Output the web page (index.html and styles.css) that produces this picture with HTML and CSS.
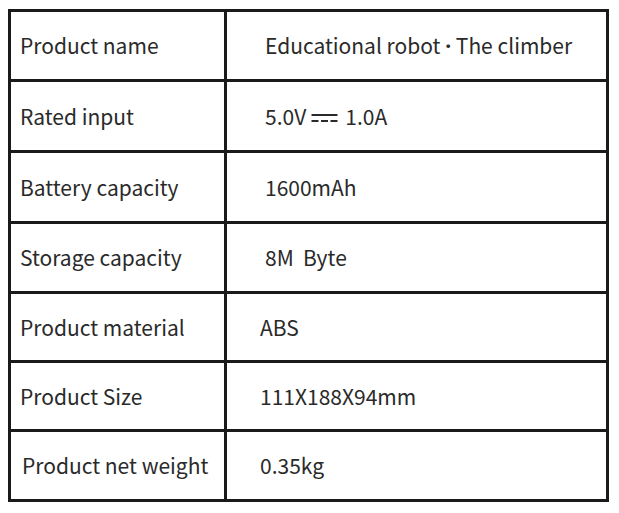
FILE: index.html
```html
<!DOCTYPE html>
<html lang="en">
<head>
<meta charset="utf-8">
<title>Product specifications</title>
<link rel="stylesheet" href="styles.css">
</head>
<body>
<table class="spec">
  <tr class="r1">
    <td class="k">Product name</td>
    <td class="v">Educational robot <span class="dot">·</span> The climber</td>
  </tr>
  <tr class="r2">
    <td class="k">Rated input</td>
    <td class="v">5.0V<svg class="dc" width="27" height="10" viewBox="0 0 27 10" aria-hidden="true"><rect x="0.5" y="1" width="26" height="2" fill="#2a2a2a"/><rect x="0.5" y="7" width="7" height="2" fill="#2a2a2a"/><rect x="10" y="7" width="7" height="2" fill="#2a2a2a"/><rect x="19.5" y="7" width="7" height="2" fill="#2a2a2a"/></svg>1.0A</td>
  </tr>
  <tr class="r3">
    <td class="k">Battery capacity</td>
    <td class="v">1600mAh</td>
  </tr>
  <tr class="r4">
    <td class="k">Storage capacity</td>
    <td class="v">8M&nbsp;&nbsp;Byte</td>
  </tr>
  <tr class="r5">
    <td class="k">Product material</td>
    <td class="v v-tight">ABS</td>
  </tr>
  <tr class="r6">
    <td class="k">Product Size</td>
    <td class="v v-tight">111X188X94mm</td>
  </tr>
  <tr class="r7">
    <td class="k k-wide">Product net weight</td>
    <td class="v v-tight">0.35kg</td>
  </tr>
</table>
</body>
</html>
```

FILE: styles.css
```css
html, body {
  margin: 0;
  padding: 0;
  background: #ffffff;
}

body {
  padding: 9px 0 0 8px;
  font-family: "Noto Sans CJK SC", "Noto Sans", sans-serif;
  font-size: 21px;
  color: #2a2a2a;
}

.spec {
  border-collapse: collapse;
  width: 601px;
  table-layout: fixed;
  border: 3px solid #1a1a1a;
}

.spec td {
  border: 3px solid #1a1a1a;
  padding: 0;
  vertical-align: middle;
  line-height: 1;
  white-space: nowrap;
}

.spec td.k {
  width: 204px;
  padding-left: 9px;
}

.spec td.k-wide {
  padding-left: 11px;
}

.spec td.v {
  padding-left: 38px;
}

.spec td.v-tight {
  padding-left: 33px;
}

.dot {
  font-family: "Noto Sans", sans-serif;
  font-weight: 700;
}

.r1 { height: 70px; }
.r2 { height: 71px; }
.r3 { height: 71px; }
.r4 { height: 70px; }
.r5 { height: 69px; }
.r6 { height: 69px; }
.r7 { height: 70px; }

.dc {
  display: inline-block;
  vertical-align: middle;
  margin: 0 7px 0 5px;
  position: relative;
  top: -1px;
}
```
